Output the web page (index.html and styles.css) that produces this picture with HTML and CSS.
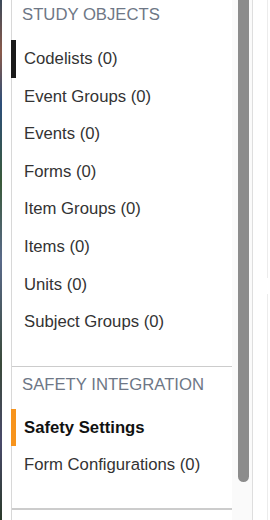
FILE: index.html
```html
<!DOCTYPE html>
<html lang="en">
<head>
  <meta charset="UTF-8">
  <meta name="viewport" content="width=device-width, initial-scale=1.0">
  <title>Study Objects</title>
  <link rel="stylesheet" href="styles.css">
</head>
<body>
  <div class="layout">
    <div class="edge"></div>

    <!-- Side navigation -->
    <div class="sidebar">
      <div class="section">
        <h2 class="section-title">STUDY OBJECTS</h2>
        <ul class="nav-list">
          <li class="nav-item active">Codelists (0)</li>
          <li class="nav-item">Event Groups (0)</li>
          <li class="nav-item">Events (0)</li>
          <li class="nav-item">Forms (0)</li>
          <li class="nav-item">Item Groups (0)</li>
          <li class="nav-item">Items (0)</li>
          <li class="nav-item">Units (0)</li>
          <li class="nav-item">Subject Groups (0)</li>
        </ul>
      </div>
      <div class="section">
        <h2 class="section-title">SAFETY INTEGRATION</h2>
        <ul class="nav-list">
          <li class="nav-item selected">Safety Settings</li>
          <li class="nav-item">Form Configurations (0)</li>
        </ul>
      </div>
    </div>

    <!-- Scrollbar -->
    <div class="scroll-track">
      <div class="scroll-thumb"></div>
    </div>

    <div class="content">
      <div class="content-line top"></div>
      <div class="content-line bottom"></div>
    </div>
  </div>
</body>
</html>
```

FILE: styles.css
```css
body {
  margin: 0;
  font-family: 'Liberation Sans', Arial, sans-serif;
  background-color: #ffffff;
  color: #333;
}
.layout {
  display: flex;
  height: 520px;
  overflow: hidden;
}
.edge {
  width: 2px;
  background: linear-gradient(to bottom, #3b4a5a, #8a5a4a 10%, #2d4f7a 20%, #3a5a3a 35%, #5a6a8a 50%, #3a4a3a 70%, #4a4a6a 85%, #2a3a2a);
}
.sidebar {
  width: 220px;
  margin-left: 9px;
  border-left: 1px solid #d8d8d8;
  background-color: #ffffff;
}
.section {
  border-bottom: 2px solid #cccccc;
}
.section:first-child {
  border-bottom: 1px solid #cccccc;
  padding-bottom: 25px;
}
.section:last-child {
  padding-bottom: 24px;
}
.section-title {
  margin: 0;
  padding: 6px 0 0 10px;
  height: 34px;
  box-sizing: border-box;
  font-size: 16.7px;
  font-weight: normal;
  line-height: 18px;
  color: #6e7786;
}
.section:last-child .section-title {
  height: 42px;
  padding-top: 9px;
}
.nav-list {
  list-style: none;
  margin: 0;
  padding: 0;
}
.nav-item {
  height: 37.6px;
  line-height: 37.6px;
  padding-left: 8px;
  font-size: 16.7px;
  color: #333;
  border-left: 5px solid transparent;
  margin-left: -1px;
}
.section:first-child .nav-list {
  margin-top: 6px;
}
.nav-item.active {
  border-left-color: #1a1a1a;
}
.nav-item.selected {
  border-left-color: #f7941d;
  font-weight: bold;
  color: #111;
}
.scroll-track {
  width: 20px;
  background-color: #fafafa;
  border-right: 1px solid #dedede;
  display: flex;
  justify-content: center;
}
.scroll-thumb {
  width: 11px;
  height: 482px;
  background-color: #8c8c8c;
  border-radius: 0 0 6px 6px;
  margin-left: 2px;
}
.content {
  flex: 1;
  display: flex;
  flex-direction: column;
  align-items: flex-end;
  padding-right: 2px;
}
.content-line {
  width: 1px;
  background-color: #ececec;
}
.content-line.top {
  height: 278px;
}
.content-line.bottom {
  margin-top: 16px;
  flex: 1;
}
```
